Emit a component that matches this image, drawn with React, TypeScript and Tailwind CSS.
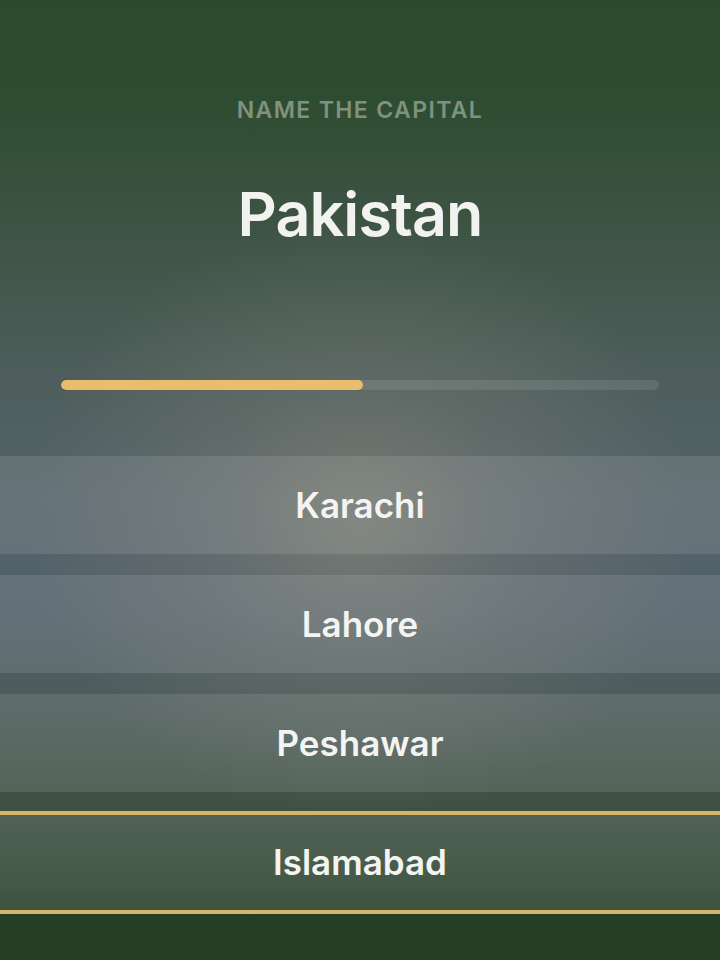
import React from "react";

const options = [
  { name: "Karachi", selected: false },
  { name: "Lahore", selected: false },
  { name: "Peshawar", selected: false },
  { name: "Islamabad", selected: true },
];

export default function App() {
  const progress = 0.505;

  return (
    <div className="relative w-[720px] h-[960px] overflow-hidden bg-[linear-gradient(180deg,#2c4a2e_0%,#2e4c31_10%,#3e5444_24%,#4d5d5a_38%,#55636a_52%,#52606a_64%,#4b5a57_75%,#3e5142_84%,#344a38_90%,#243e25_96%)] font-['Inter','Roboto',sans-serif]">
      {/* warm glow behind the content */}
      <div className="absolute inset-0 bg-[radial-gradient(ellipse_330px_300px_at_50%_520px,rgba(140,138,122,0.6)_0%,rgba(125,128,118,0.35)_45%,rgba(110,120,120,0)_100%)]" />

      <div className="relative flex flex-col items-center">
        <p className="mt-[97px] text-[23px] font-semibold tracking-[0.06em] text-[#7f927d] leading-[26px]">
          NAME THE CAPITAL
        </p>
        <h1 className="mt-[55px] text-[61px] font-semibold text-[#f2f2f0] leading-[72px] tracking-[-0.015em]">
          Pakistan
        </h1>

        <div className="mt-[130px] w-[598px] h-[10px] rounded-full bg-white/10 overflow-hidden">
          <div
            className="h-full rounded-full bg-[#e9bd6c]"
            style={{ width: `${progress * 100}%` }}
          />
        </div>

        <div className="mt-[66px] w-full flex flex-col gap-[21px]">
          {options.map((o) => (
            <button
              key={o.name}
              className={`w-full flex items-center justify-center text-[35px] font-semibold text-[#f4f4f2] ${
                o.selected
                  ? "h-[103px] -mt-[2px] border-y-4 border-[#d8b46a] bg-white/10"
                  : "h-[98px] bg-white/10"
              }`}
            >
              {o.name}
            </button>
          ))}
        </div>
      </div>
    </div>
  );
}
